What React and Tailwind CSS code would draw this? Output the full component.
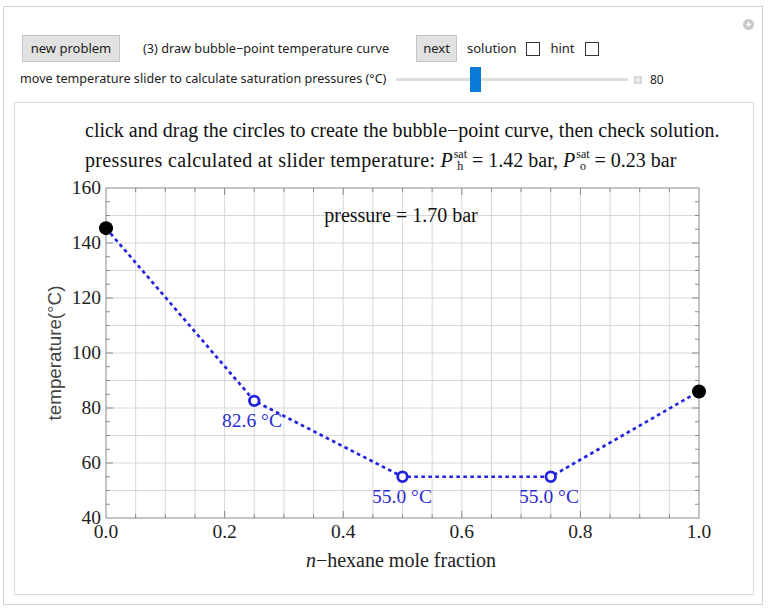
import React from "react";

const X = (f) => 106 + f * 593;
const Y = (t) => 188 + (160 - t) * 2.75;

function Plot() {
  const vgrid = [];
  for (let i = 1; i < 20; i++) vgrid.push(X(i * 0.05));
  const hgrid = [];
  for (let j = 1; j < 12; j++) hgrid.push(Y(40 + j * 10));
  const yTicks = [];
  for (let t = 45; t < 160; t += 5) yTicks.push({ y: Y(t), len: t % 20 === 0 ? 7 : 4 });
  const xTicks = [];
  for (let i = 1; i < 20; i++) xTicks.push({ x: X(i * 0.05), len: i % 4 === 0 ? 7 : 4 });
  const pts = [
    [0, 145.4],
    [0.25, 82.6],
    [0.5, 55],
    [0.75, 55],
    [1, 86],
  ];
  const poly = pts.map(([f, t]) => `${X(f)},${Y(t)}`).join(" ");
  const blue = "#2323e0";
  return (
    <svg
      width="737"
      height="416"
      viewBox="15 177 737 416"
      className="block"
      style={{ fontFamily: "'Liberation Serif', serif" }}
    >
      {vgrid.map((x, i) => (
        <line key={"v" + i} x1={x} x2={x} y1={188} y2={518} stroke="#d8d8d8" strokeWidth="1" />
      ))}
      {hgrid.map((y, i) => (
        <line key={"h" + i} x1={106} x2={699} y1={y} y2={y} stroke="#d8d8d8" strokeWidth="1" />
      ))}
      {yTicks.map((t, i) => (
        <g key={"yt" + i} stroke="#8a8a8a" strokeWidth="1">
          <line x1={106} x2={106 + t.len} y1={t.y} y2={t.y} />
          <line x1={699} x2={699 - t.len} y1={t.y} y2={t.y} />
        </g>
      ))}
      {xTicks.map((t, i) => (
        <g key={"xt" + i} stroke="#8a8a8a" strokeWidth="1">
          <line x1={t.x} x2={t.x} y1={518} y2={518 - t.len} />
          <line x1={t.x} x2={t.x} y1={188} y2={188 + t.len} />
        </g>
      ))}
      <rect x={106} y={188} width={593} height={330} fill="none" stroke="#8a8a8a" strokeWidth="1" />

      {[40, 60, 80, 100, 120, 140, 160].map((t) => (
        <text key={"yl" + t} x={101} y={Y(t) + 6} textAnchor="end" fontSize="19.5" fill="#222">
          {t}
        </text>
      ))}
      {["0.0", "0.2", "0.4", "0.6", "0.8", "1.0"].map((s, i) => (
        <text key={"xl" + s} x={X(i * 0.2)} y={538} textAnchor="middle" fontSize="19.5" fill="#222">
          {s}
        </text>
      ))}
      <text
        x={0}
        y={0}
        transform="translate(61 353) rotate(-90)"
        textAnchor="middle"
        fontSize="18.8"
        fill="#444"
        style={{ fontFamily: "'Liberation Sans', sans-serif" }}
      >
        temperature(°C)
      </text>
      <text x={401} y={567} textAnchor="middle" fontSize="20" fill="#222">
        <tspan fontStyle="italic">n</tspan>−hexane mole fraction
      </text>

      <text x={401} y={222} textAnchor="middle" fontSize="20" fill="#111">
        pressure = 1.70 bar
      </text>

      <polyline points={poly} fill="none" stroke={blue} strokeWidth="2.7" strokeDasharray="3.6 3.4" />

      <circle cx={X(0)} cy={Y(145.4)} r="7" fill="#000" />
      <circle cx={X(1)} cy={Y(86)} r="7" fill="#000" />
      {pts.slice(1, 4).map(([f, t], i) => (
        <circle key={"c" + i} cx={X(f)} cy={Y(t)} r="4.8" fill="#fff" stroke={blue} strokeWidth="2.8" />
      ))}

      <text x={252} y={427} textAnchor="middle" fontSize="19.5" fill="#2b2bd6">
        82.6 °C
      </text>
      <text x={402} y={503} textAnchor="middle" fontSize="19.5" fill="#2b2bd6">
        55.0 °C
      </text>
      <text x={549} y={503} textAnchor="middle" fontSize="19.5" fill="#2b2bd6">
        55.0 °C
      </text>
    </svg>
  );
}

function PSat({ sub }) {
  return (
    <span>
      <i>P</i>
      <span className="inline-flex flex-col text-[12px] leading-[12px] align-[9px] ml-[1px]">
        <span>sat</span>
        <span className="text-center">{sub}</span>
      </span>
    </span>
  );
}

export default function App() {
  return (
    <div className="w-[768px] h-[609px] bg-white overflow-hidden">
      <div className="relative ml-[3px] mt-[6px] w-[760px] h-[599px] border border-[#d0d0d0] bg-white">
        <div className="absolute left-[739px] top-[12px] w-[11px] h-[11px] rounded-full bg-[#c9c9c9] flex items-center justify-center">
          <svg width="7" height="7" viewBox="0 0 7 7">
            <path d="M3.5 1v5M1 3.5h5" stroke="#fff" strokeWidth="1.4" />
          </svg>
        </div>

        <div
          className="flex items-center pl-[18px] mt-[28px] h-[27px] text-[12.7px] text-[#222]"
          style={{ fontFamily: "'Noto Sans', sans-serif" }}
        >
          <div className="w-[98px] h-[27px] bg-[#e1e1e1] border border-[#c4c4c4] flex items-center justify-center text-[13px]">
            new problem
          </div>
          <span className="ml-[23px] w-[273px] whitespace-nowrap">(3) draw bubble−point temperature curve</span>
          <div className="w-[41px] h-[27px] bg-[#e1e1e1] border border-[#c4c4c4] flex items-center justify-center text-[13px]">
            next
          </div>
          <span className="ml-[10px] text-[13px]">solution</span>
          <span className="ml-[10px] w-[14px] h-[14px] border border-[#333] bg-white" />
          <span className="ml-[10px] text-[13px]">hint</span>
          <span className="ml-[10px] w-[14px] h-[14px] border border-[#333] bg-white" />
        </div>

        <div
          className="flex items-center pl-[16px] mt-[5px] h-[25px] text-[12.6px] text-[#222]"
          style={{ fontFamily: "'Noto Sans', sans-serif" }}
        >
          <span className="w-[376px] whitespace-nowrap">move temperature slider to calculate saturation pressures (°C)</span>
          <div className="relative w-[232px] h-[25px] flex items-center">
            <div className="w-full h-[3px] bg-[#dedede]" />
            <div className="absolute left-[74px] top-0 w-[11px] h-[25px] bg-[#0a7ad8]" />
          </div>
          <div className="ml-[6px] w-[8px] h-[8px] bg-[#d8d8d8] flex items-center justify-center">
            <svg width="6" height="6" viewBox="0 0 6 6">
              <path d="M3 0.5v5M0.5 3h5" stroke="#fff" strokeWidth="1.2" />
            </svg>
          </div>
          <span className="ml-[8px] text-[12px]">80</span>
        </div>

        <div className="ml-[10px] mt-[10px] w-[740px] h-[493px] border border-[#dadada] bg-white">
          <div
            className="pl-[70px] pt-[12px] h-[74px] text-[20px] text-[#111]"
            style={{ fontFamily: "'Liberation Serif', serif" }}
          >
            <div className="h-[30px] leading-[30px] whitespace-nowrap">
              click and drag the circles to create the bubble−point curve, then check solution.
            </div>
            <div className="h-[31px] leading-[30px] whitespace-nowrap">
              <span className="tracking-[0.35px]">pressures calculated at slider temperature:</span>{" "}
              <PSat sub="h" /> = 1.42 bar, <PSat sub="o" /> = 0.23 bar
            </div>
          </div>
          <Plot />
        </div>
      </div>
    </div>
  );
}
